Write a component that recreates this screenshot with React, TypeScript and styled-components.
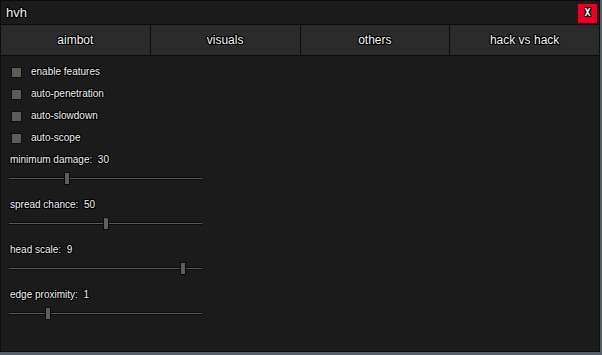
import React from 'react';
import styled, { createGlobalStyle } from 'styled-components';

const GlobalStyle = createGlobalStyle`
    html, body {
        margin: 0;
        padding: 0;
        background: #55606a;
    }
    body {
        font-family: "Liberation Sans", Arial, sans-serif;
    }
`;

const outline = `
    text-shadow: 1px 0 0 #000, -1px 0 0 #000, 0 1px 0 #000, 0 -1px 0 #000,
        1px 1px 0 #000, -1px -1px 0 #000, 1px -1px 0 #000, -1px 1px 0 #000;
`;

const Window = styled.div`
    width: 600px;
    height: 352px;
    box-sizing: border-box;
    background: #1b1b1b;
    border: 1px solid #0c0c0c;
    display: flex;
    flex-direction: column;
    color: #f4f4f4;
`;

const TitleBar = styled.div`
    height: 23px;
    display: flex;
    align-items: center;
    justify-content: space-between;
    padding: 0 1px 0 5px;
    border-bottom: 1px solid #0c0c0c;
`;

const Title = styled.span`
    font-size: 13px;
    ${outline}
`;

const CloseButton = styled.button`
    width: 21px;
    height: 21px;
    margin-top: 1px;
    padding: 0;
    box-sizing: border-box;
    background: #e6002a;
    border: 1px solid #5a0010;
    color: #fff;
    font-family: "DejaVu Sans Mono", monospace;
    font-size: 10px;
    font-weight: bold;
    line-height: 18px;
    ${outline}
`;

const TabBar = styled.div`
    height: 30px;
    display: flex;
    border-bottom: 1px solid #0c0c0c;
`;

const Tab = styled.div`
    flex: 1;
    display: flex;
    align-items: center;
    justify-content: center;
    background: #2b2b2b;
    font-size: 12px;
    ${outline}
    &:not(:last-child) {
        border-right: 1px solid #0c0c0c;
    }
`;

const Content = styled.div`
    padding: 5px 0 0 8px;
    display: flex;
    flex-direction: column;
`;

const CheckRow = styled.div`
    height: 22px;
    display: flex;
    align-items: center;
    gap: 9px;
    padding-left: 2px;
`;

const Box = styled.span<{ checked?: boolean }>`
    width: 11px;
    height: 11px;
    box-sizing: border-box;
    background: ${(p) => (p.checked ? '#c8c8c8' : '#5c5c5c')};
    border: 1px solid #0e0e0e;
`;

const Label = styled.span`
    font-size: 10px;
    line-height: 12px;
    ${outline}
`;

const SliderBlock = styled.div`
    display: flex;
    flex-direction: column;
    padding-top: 5px;
    padding-bottom: 9px;
`;

const SliderLabel = styled(Label)`
    padding-left: 1px;
`;

const Track = styled.div`
    position: relative;
    width: 193px;
    height: 13px;
    margin-top: 6px;
    &::before {
        content: '';
        position: absolute;
        left: 0;
        right: 0;
        top: 5px;
        height: 1px;
        background: #5a5a5a;
        border-top: 1px solid #0a0a0a;
        border-bottom: 1px solid #0a0a0a;
    }
`;

const Thumb = styled.span`
    position: absolute;
    top: 0;
    width: 6px;
    height: 13px;
    box-sizing: border-box;
    margin-left: -3px;
    background: #5e5e5e;
    border: 1px solid #0a0a0a;
`;

const checks = ['enable features', 'auto-penetration', 'auto-slowdown', 'auto-scope'];

const sliders = [
    { label: 'minimum damage:', value: 30, max: 100 },
    { label: 'spread chance:', value: 50, max: 100 },
    { label: 'head scale:', value: 9, max: 10 },
    { label: 'edge proximity:', value: 1, max: 5 },
];

const tabs = ['aimbot', 'visuals', 'others', 'hack vs hack'];

const App: React.FC = () => {
    return (
        <>
            <GlobalStyle />
            <Window>
                <TitleBar>
                    <Title>hvh</Title>
                    <CloseButton>X</CloseButton>
                </TitleBar>
                <TabBar>
                    {tabs.map((t) => (
                        <Tab key={t}>{t}</Tab>
                    ))}
                </TabBar>
                <Content>
                    {checks.map((c) => (
                        <CheckRow key={c}>
                            <Box />
                            <Label>{c}</Label>
                        </CheckRow>
                    ))}
                    {sliders.map((s) => (
                        <SliderBlock key={s.label}>
                            <SliderLabel>
                                {s.label}{'\u00a0 '}{s.value}
                            </SliderLabel>
                            <Track>
                                <Thumb style={{ left: `${(s.value / s.max) * 100}%` }} />
                            </Track>
                        </SliderBlock>
                    ))}
                </Content>
            </Window>
        </>
    );
};

export default App;
